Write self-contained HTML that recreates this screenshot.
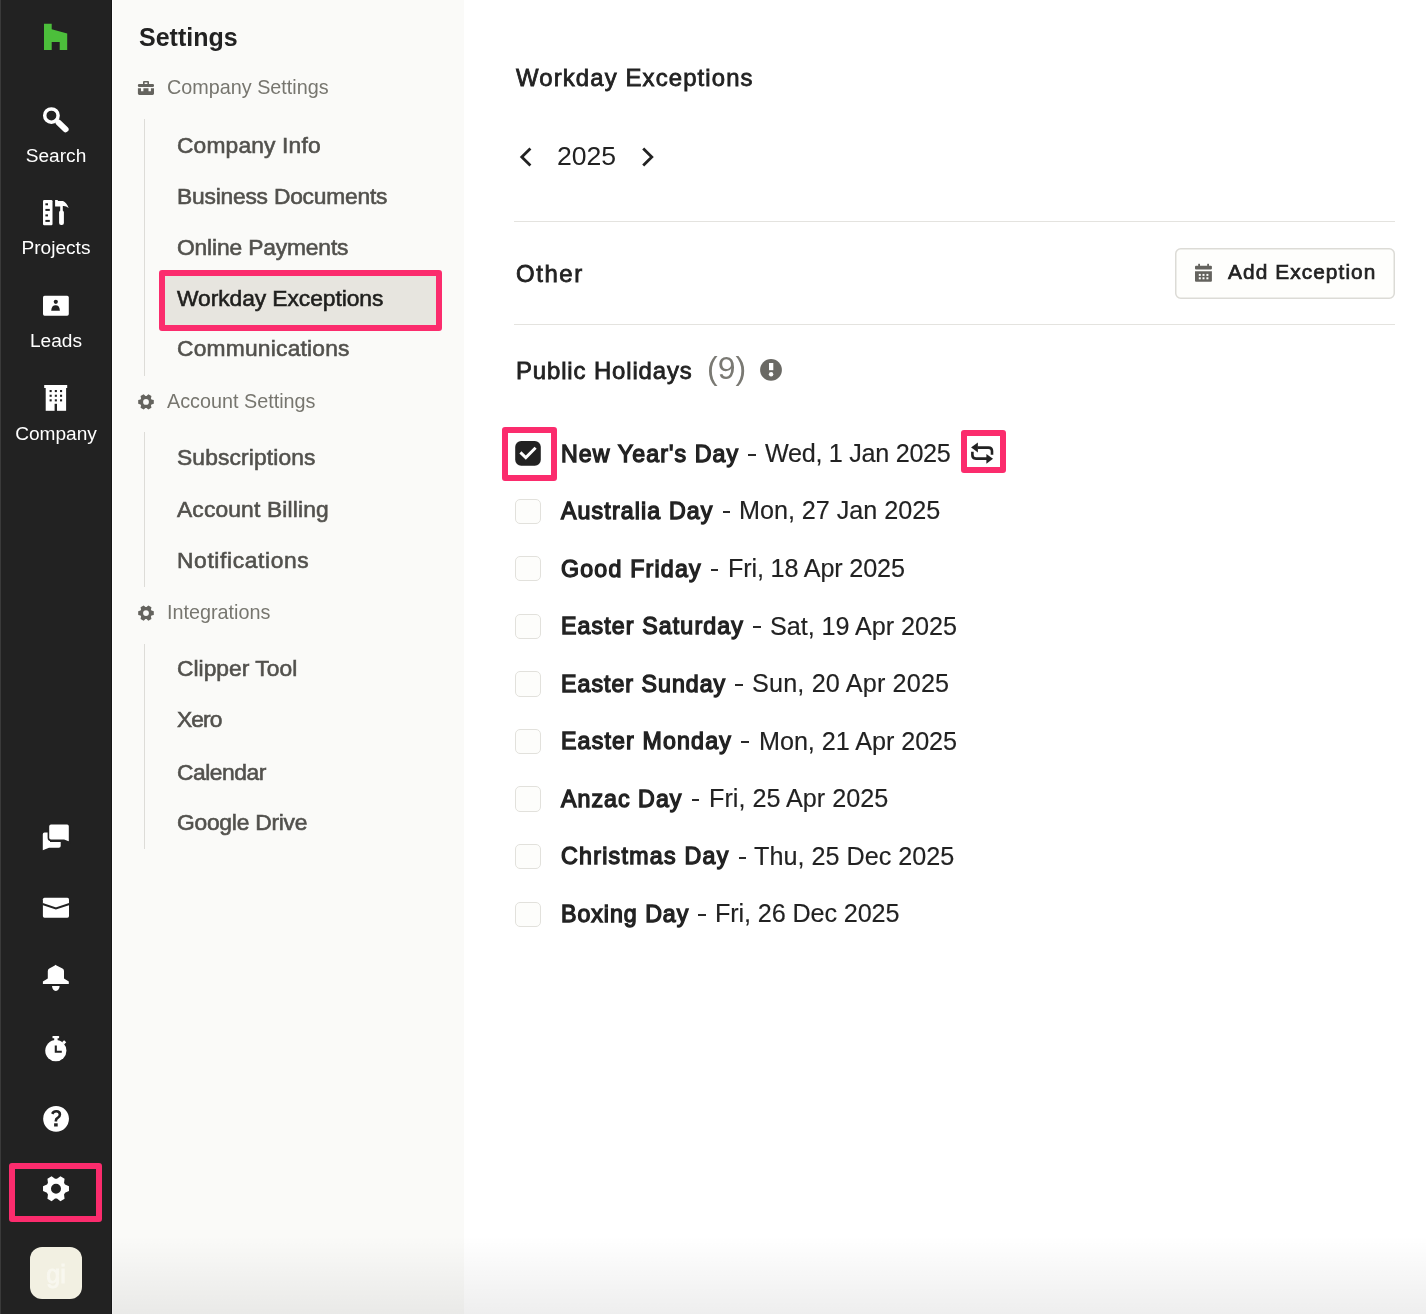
<!DOCTYPE html>
<html><head><meta charset="utf-8">
<style>
*{margin:0;padding:0;box-sizing:border-box}
html,body{width:1426px;height:1314px;overflow:hidden;background:#fff;font-family:"Liberation Sans",sans-serif}
.abs{position:absolute}
.t{position:absolute;white-space:nowrap;line-height:1;will-change:transform}
.row b{font-weight:700}
.sep{font-size:25.4px;word-spacing:0.5px}
.dt{font-size:25.5px}
.pink{position:absolute;border:6px solid #fb2c6d;border-radius:3px}
.cb{position:absolute;left:515px;width:25.6px;height:25.4px;border:1px solid #e2e1dc;border-radius:5px;background:#fdfdfb}
#shade{position:absolute;left:112px;top:1236px;width:1314px;height:78px;background:linear-gradient(to bottom,rgba(0,0,0,0),rgba(0,0,0,0.065))}
</style></head>
<body>
<div class="abs" style="left:0;top:0;width:112px;height:1314px;background:#222222"></div>
<div class="abs" style="left:0;top:0;width:1.3px;height:1314px;background:#3a3a3a"></div>
<div class="abs" style="left:111px;top:0;width:1px;height:1314px;background:#161616"></div>
<div class="abs" style="left:112px;top:0;width:352px;height:1314px;background:#fafaf8"></div>
<div class="abs" style="left:112px;top:0;width:1.2px;height:1314px;background:#ffffff"></div>
<svg class="abs" style="left:0;top:0" width="112" height="1314" viewBox="0 0 112 1314"><polygon fill="#4cbf3b" points="44,23.7 51.7,23.7 51.7,29.2 67.2,33.5 67.2,50 59.7,50 59.7,42 51.7,42 51.7,50 44,50"/><circle cx="51.4" cy="115.6" r="6.7" fill="none" stroke="#fff" stroke-width="3.5"/><line x1="58.6" y1="122.6" x2="65.6" y2="129.3" stroke="#fff" stroke-width="6" stroke-linecap="round"/><rect x="43" y="200" width="9.5" height="25.2" rx="1.2" fill="#fff"/><rect x="45.4" y="203.3" width="2.6" height="2" fill="#222"/><rect x="45.4" y="208.9" width="4.4" height="2" fill="#222"/><rect x="45.4" y="214.4" width="2.6" height="2" fill="#222"/><rect x="45.4" y="219.9" width="4.4" height="2" fill="#222"/><path fill="#fff" d="M55.1,200 L57.8,200 L57.8,201 L63,201 Q66.5,202.5 68.7,207.9 Q65.5,205.5 62.8,206 L62.8,211 L60.2,211 L60.2,206.6 L57.8,206.6 L57.8,206.6 L55.1,206.6 Z"/><rect x="59.1" y="210.5" width="4.8" height="14.6" rx="2" fill="#fff"/><rect x="43" y="295.8" width="25.8" height="19.9" rx="1.6" fill="#fff"/><circle cx="55.8" cy="301.8" r="2.1" fill="#222"/><path fill="#222" d="M51.2,310.7 Q51.6,305.3 55.6,305.3 Q59.6,305.3 59.9,310.7 Z"/><rect x="44.2" y="385" width="23" height="3" fill="#fff"/><rect x="45.7" y="387" width="20.4" height="23.8" fill="#fff"/><g fill="#222"><rect x="49.6" y="390" width="2.1" height="2.1"/><rect x="54.8" y="390" width="2.1" height="2.1"/><rect x="60" y="390" width="2.1" height="2.1"/><rect x="49.6" y="394.7" width="2.1" height="2.1"/><rect x="54.8" y="394.7" width="2.1" height="2.1"/><rect x="60" y="394.7" width="2.1" height="2.1"/><rect x="49.6" y="399.3" width="2.1" height="2.1"/><rect x="54.8" y="399.3" width="2.1" height="2.1"/><rect x="60" y="399.3" width="2.1" height="2.1"/><rect x="54.6" y="403.8" width="2.4" height="7.2"/></g><path fill="#fff" d="M44.5,832.5 L50,832.5 L50,842 L60.7,842 L60.7,846 Q60.7,847.8 58.8,847.8 L49,847.8 L42.8,850.2 L42.8,834.2 Q42.8,832.5 44.5,832.5 Z"/><path fill="#fff" stroke="#222" stroke-width="1.6" d="M51,823.8 L67.2,823.8 Q69.6,823.8 69.6,826.2 L69.6,842.6 L64,840.3 L51,840.3 Q48.4,840.3 48.4,837.7 L48.4,826.4 Q48.4,823.8 51,823.8 Z"/><rect x="42.9" y="897.7" width="26.1" height="20" rx="1.6" fill="#fff"/><polyline points="42.5,904 55.9,908.4 69.4,904" fill="none" stroke="#222" stroke-width="2"/><path fill="#fff" d="M55.6,964.8 L56.5,965.6 L62.5,968.5 Q64,969.3 64,971 L64,978.6 L68.8,981.6 L68.8,983.9 L42.9,983.9 L42.9,981.6 L47.8,978.6 L47.8,971 Q47.8,969.3 49.3,968.5 L54.8,965.6 Z"/><path fill="#fff" d="M52,986.1 L59.6,986.1 Q59.2,990.9 55.8,990.9 Q52.4,990.9 52,986.1 Z"/><circle cx="55.85" cy="1050.7" r="10.6" fill="#fff"/><rect x="52.5" y="1035.9" width="6.6" height="2.4" rx="0.6" fill="#fff"/><rect x="54.2" y="1037.5" width="3.4" height="4" fill="#fff"/><rect x="62.6" y="1040.8" width="3" height="3" transform="rotate(45 64.1 1042.3)" fill="#fff"/><path d="M55.8,1045.6 L55.8,1051.8 L61.8,1051.8" fill="none" stroke="#222" stroke-width="2.1"/><circle cx="56.05" cy="1118.8" r="12.9" fill="#fff"/><path d="M52.2,1113.8 Q53.5,1111.3 56.2,1111.3 Q59.9,1111.3 59.9,1114.6 Q59.9,1116.7 57.7,1117.8 Q55.9,1118.7 55.9,1120.4 L55.9,1121.4" fill="none" stroke="#222" stroke-width="2.6"/><rect x="54.1" y="1123.3" width="3.6" height="3.2" fill="#222"/><path fill="#fff" fill-rule="evenodd" d="M65.02,1192.78 L68.98,1191.09 L68.98,1186.31 L65.02,1184.62 L64.81,1184.18 L64.57,1183.75 L64.32,1183.33 L64.04,1182.92 L64.56,1178.65 L60.42,1176.26 L56.98,1178.85 L56.49,1178.81 L56.00,1178.80 L55.51,1178.81 L55.02,1178.85 L51.58,1176.26 L47.44,1178.65 L47.96,1182.92 L47.68,1183.33 L47.43,1183.75 L47.19,1184.18 L46.98,1184.62 L43.02,1186.31 L43.02,1191.09 L46.98,1192.78 L47.19,1193.22 L47.43,1193.65 L47.68,1194.07 L47.96,1194.48 L47.44,1198.75 L51.58,1201.14 L55.02,1198.55 L55.51,1198.59 L56.00,1198.60 L56.49,1198.59 L56.98,1198.55 L60.42,1201.14 L64.56,1198.75 L64.04,1194.48 L64.32,1194.07 L64.57,1193.65 L64.81,1193.22 Z M61.00,1188.70 A5.0,5.0 0 1,0 51.00,1188.70 A5.0,5.0 0 1,0 61.00,1188.70 Z"/></svg>
<div class="t" style="left:-4px;width:120px;text-align:center;top:145.53px;font-size:19.1px;color:#fff;font-weight:400;">Search</div>

<div class="t" style="left:-4px;width:120px;text-align:center;top:238.03px;font-size:19.1px;color:#fff;font-weight:400;">Projects</div>

<div class="t" style="left:-4px;width:120px;text-align:center;top:331.03px;font-size:19.1px;color:#fff;font-weight:400;">Leads</div>

<div class="t" style="left:-4px;width:120px;text-align:center;top:424.03px;font-size:19.1px;color:#fff;font-weight:400;">Company</div>

<div class="pink" style="left:9px;top:1163px;width:93px;height:59px"></div>
<div class="abs" style="left:30px;top:1246.5px;width:52px;height:52px;border-radius:12px;background:#f2f0e2"></div>
<div class="t" style="left:30px;width:52px;text-align:center;top:1262px;font-size:25px;color:#f8f7ef;font-weight:400;-webkit-text-stroke:0.8px #f8f7ef">gi</div>
<div class="t " style="left:138.5px;top:24.73px;font-size:25px;color:#222;font-weight:700;">Settings</div>

<svg class="abs" style="left:112px;top:0" width="352" height="900" viewBox="112 0 352 900"><g fill="#64635e"><path d="M143,84.2 L143,82 Q143,81 144,81 L148,81 Q149,81 149,82 L149,84.2 L147.4,84.2 L147.4,82.4 L144.6,82.4 L144.6,84.2 Z"/><rect x="137.9" y="84" width="16.1" height="3" rx="1.2"/><path d="M137.9,88.2 L141,88.2 L141,91.2 L143.4,91.2 L143.4,88.2 L148.5,88.2 L148.5,91.2 L150.9,91.2 L150.9,88.2 L154,88.2 L154,93.6 Q154,95 152.6,95 L139.3,95 Q137.9,95 137.9,93.6 Z"/><path fill-rule="evenodd" d="M151.45,404.42 L153.80,403.68 L153.80,400.12 L151.45,399.38 L151.33,399.14 L151.20,398.90 L151.06,398.67 L150.90,398.44 L151.44,396.04 L148.35,394.25 L146.54,395.92 L146.27,395.91 L146.00,395.90 L145.73,395.91 L145.46,395.92 L143.65,394.25 L140.56,396.04 L141.10,398.44 L140.94,398.67 L140.80,398.90 L140.67,399.14 L140.55,399.38 L138.20,400.12 L138.20,403.68 L140.55,404.42 L140.67,404.66 L140.80,404.90 L140.94,405.13 L141.10,405.36 L140.56,407.76 L143.65,409.55 L145.46,407.88 L145.73,407.89 L146.00,407.90 L146.27,407.89 L146.54,407.88 L148.35,409.55 L151.44,407.76 L150.90,405.36 L151.06,405.13 L151.20,404.90 L151.33,404.66 Z M148.90,401.90 A2.9,2.9 0 1,0 143.10,401.90 A2.9,2.9 0 1,0 148.90,401.90 Z"/><path fill-rule="evenodd" d="M151.45,615.62 L153.80,614.88 L153.80,611.32 L151.45,610.58 L151.33,610.34 L151.20,610.10 L151.06,609.87 L150.90,609.64 L151.44,607.24 L148.35,605.45 L146.54,607.12 L146.27,607.11 L146.00,607.10 L145.73,607.11 L145.46,607.12 L143.65,605.45 L140.56,607.24 L141.10,609.64 L140.94,609.87 L140.80,610.10 L140.67,610.34 L140.55,610.58 L138.20,611.32 L138.20,614.88 L140.55,615.62 L140.67,615.86 L140.80,616.10 L140.94,616.33 L141.10,616.56 L140.56,618.96 L143.65,620.75 L145.46,619.08 L145.73,619.09 L146.00,619.10 L146.27,619.09 L146.54,619.08 L148.35,620.75 L151.44,618.96 L150.90,616.56 L151.06,616.33 L151.20,616.10 L151.33,615.86 Z M148.90,613.10 A2.9,2.9 0 1,0 143.10,613.10 A2.9,2.9 0 1,0 148.90,613.10 Z"/></g><g fill="#dddcd8"><rect x="144" y="119" width="1" height="257"/><rect x="144" y="432" width="1" height="155"/><rect x="144" y="644" width="1" height="205"/></g></svg>
<div class="t " style="left:166.5px;top:77.74px;font-size:19.8px;color:#77766f;font-weight:400;">Company Settings</div>

<div class="t " style="left:166.5px;top:392.14px;font-size:19.8px;color:#77766f;font-weight:400;">Account Settings</div>

<div class="t " style="left:166.5px;top:603.24px;font-size:19.8px;color:#77766f;font-weight:400;">Integrations</div>

<div class="abs" style="left:165px;top:276px;width:272px;height:50px;background:#e7e5df"></div>
<div class="t" style="left:177.4px;top:134.30px;font-size:22.8px;color:#52514d;letter-spacing:0.151px;-webkit-text-stroke:0.6px #52514d">Company Info</div>

<div class="t" style="left:177.4px;top:185.20px;font-size:22.8px;color:#52514d;letter-spacing:-0.217px;-webkit-text-stroke:0.6px #52514d">Business Documents</div>

<div class="t" style="left:177.4px;top:236.00px;font-size:22.8px;color:#52514d;letter-spacing:-0.151px;-webkit-text-stroke:0.6px #52514d">Online Payments</div>

<div class="t" style="left:177.4px;top:286.70px;font-size:22.8px;color:#1f1f1d;letter-spacing:-0.064px;-webkit-text-stroke:0.6px #1f1f1d">Workday Exceptions</div>

<div class="t" style="left:177.4px;top:337.40px;font-size:22.8px;color:#52514d;letter-spacing:0.211px;-webkit-text-stroke:0.6px #52514d">Communications</div>

<div class="t" style="left:177.4px;top:446.30px;font-size:22.8px;color:#52514d;letter-spacing:0.133px;-webkit-text-stroke:0.6px #52514d">Subscriptions</div>

<div class="t" style="left:177.4px;top:497.70px;font-size:22.8px;color:#52514d;letter-spacing:0.152px;-webkit-text-stroke:0.6px #52514d">Account Billing</div>

<div class="t" style="left:177.4px;top:548.70px;font-size:22.8px;color:#52514d;letter-spacing:0.628px;-webkit-text-stroke:0.6px #52514d">Notifications</div>

<div class="t" style="left:177.4px;top:657.40px;font-size:22.8px;color:#52514d;letter-spacing:0.025px;-webkit-text-stroke:0.6px #52514d">Clipper Tool</div>

<div class="t" style="left:177.4px;top:708.30px;font-size:22.8px;color:#52514d;letter-spacing:-0.936px;-webkit-text-stroke:0.6px #52514d">Xero</div>

<div class="t" style="left:177.4px;top:760.70px;font-size:22.8px;color:#52514d;letter-spacing:-0.453px;-webkit-text-stroke:0.6px #52514d">Calendar</div>

<div class="t" style="left:177.4px;top:811.00px;font-size:22.8px;color:#52514d;letter-spacing:-0.241px;-webkit-text-stroke:0.6px #52514d">Google Drive</div>

<div class="pink" style="left:159px;top:270px;width:283px;height:61px"></div>
<div class="t" style="left:515.80px;top:65.77px;font-size:23.9px;color:#222;letter-spacing:1.130px;-webkit-text-stroke:0.8px #222;">Workday Exceptions</div>

<svg class="abs" style="left:464px;top:0" width="962" height="1000" viewBox="464 0 962 1000"><polyline points="530.4,148.5 521.8,157 530.4,165.5" fill="none" stroke="#222" stroke-width="2.8"/><polyline points="643.2,148.5 651.8,157 643.2,165.5" fill="none" stroke="#222" stroke-width="2.8"/><rect x="514" y="221" width="881" height="1" fill="#e4e3df"/><rect x="514" y="324" width="881" height="1" fill="#e4e3df"/><rect x="1175.75" y="248.75" width="218.5" height="49.5" rx="5" fill="#fefefc" stroke="#dcdbd6" stroke-width="1.5"/><g fill="#64635e"><rect x="1198.2" y="263.8" width="1.8" height="3"/><rect x="1207.2" y="263.8" width="1.8" height="3"/><rect x="1195" y="265.8" width="16.9" height="3.8" rx="1"/><path d="M1195,271.2 L1211.9,271.2 L1211.9,280.7 Q1211.9,281.7 1210.9,281.7 L1196,281.7 Q1195,281.7 1195,280.7 Z"/></g><g fill="#fefefc"><rect x="1198.8" y="273.9" width="2" height="2"/><rect x="1202.5" y="273.9" width="2" height="2"/><rect x="1206.4" y="273.9" width="2" height="2"/><rect x="1198.8" y="277.3" width="2" height="2"/><rect x="1202.5" y="277.3" width="2" height="2"/><rect x="1206.4" y="277.3" width="2" height="2"/></g><circle cx="771" cy="369.9" r="10.9" fill="#6a6964"/><rect x="769" y="363" width="4.3" height="7.2" fill="#fff"/><circle cx="771.1" cy="374.3" r="2.2" fill="#fff"/><rect x="515.2" y="441" width="25.6" height="24.8" rx="6" fill="#222"/><polyline points="520.4,452.4 525.8,457.6 535.6,447.7" fill="none" stroke="#fff" stroke-width="2.9"/><path d="M977.6,447.6 L988.5,447.6 Q992,447.6 992,451 L992,454.7" fill="none" stroke="#222" stroke-width="2.6"/><polygon points="971.1,447.4 977.9,442.4 977.9,452.4" fill="#222"/><path d="M972.4,451.7 L972.4,455 Q972.4,458.6 976,458.6 L987,458.6" fill="none" stroke="#222" stroke-width="2.6"/><polygon points="993,458.8 986.4,453.9 986.4,463.7" fill="#222"/></svg>
<div class="t " style="left:556.5px;top:143.28px;font-size:26.6px;color:#222;font-weight:400;">2025</div>

<div class="t" style="left:516.00px;top:261.77px;font-size:23.9px;color:#222;letter-spacing:1.613px;-webkit-text-stroke:0.8px #222;">Other</div>

<div class="t" style="left:1227.75px;top:262.39px;font-size:20.8px;color:#222;letter-spacing:1.103px;-webkit-text-stroke:0.7px #222;">Add Exception</div>

<div class="t" style="left:516.20px;top:358.67px;font-size:23.9px;color:#222;letter-spacing:0.887px;-webkit-text-stroke:0.8px #222;">Public Holidays</div>

<div class="t " style="left:706.5px;top:351.91px;font-size:32px;color:#7a7973;font-weight:400;">(9)</div>

<div class="t" style="left:561.35px;top:442.56px;font-size:23.2px;color:#222;letter-spacing:1.093px;-webkit-text-stroke:1.3px #222;">New Year's Day</div>

<div class="abs" style="left:748.3px;top:453.6px;width:7.8px;height:2.1px;background:#2a2a2a"></div>
<div class="t" style="left:765.08px;top:440.87px;font-size:25.2px;color:#222;letter-spacing:-0.297px;-webkit-text-stroke:0.15px #222;">Wed, 1 Jan 2025</div>

<div class="cb" style="top:498.6px"></div>
<div class="t" style="left:561.35px;top:500.12px;font-size:23.2px;color:#222;letter-spacing:1.122px;-webkit-text-stroke:1.3px #222;">Australia Day</div>

<div class="abs" style="left:722.5px;top:511.2px;width:7.8px;height:2.1px;background:#2a2a2a"></div>
<div class="t" style="left:739.48px;top:498.43px;font-size:25.2px;color:#222;letter-spacing:-0.027px;-webkit-text-stroke:0.15px #222;">Mon, 27 Jan 2025</div>

<div class="cb" style="top:556.1px"></div>
<div class="t" style="left:561.35px;top:557.68px;font-size:23.2px;color:#222;letter-spacing:1.200px;-webkit-text-stroke:1.3px #222;">Good Friday</div>

<div class="abs" style="left:710.6px;top:568.7px;width:7.8px;height:2.1px;background:#2a2a2a"></div>
<div class="t" style="left:727.68px;top:555.99px;font-size:25.2px;color:#222;letter-spacing:-0.155px;-webkit-text-stroke:0.15px #222;">Fri, 18 Apr 2025</div>

<div class="cb" style="top:613.7px"></div>
<div class="t" style="left:561.35px;top:615.24px;font-size:23.2px;color:#222;letter-spacing:1.111px;-webkit-text-stroke:1.3px #222;">Easter Saturday</div>

<div class="abs" style="left:752.9px;top:626.3px;width:7.8px;height:2.1px;background:#2a2a2a"></div>
<div class="t" style="left:769.58px;top:613.55px;font-size:25.2px;color:#222;letter-spacing:-0.046px;-webkit-text-stroke:0.15px #222;">Sat, 19 Apr 2025</div>

<div class="cb" style="top:671.2px"></div>
<div class="t" style="left:561.35px;top:672.80px;font-size:23.2px;color:#222;letter-spacing:1.009px;-webkit-text-stroke:1.3px #222;">Easter Sunday</div>

<div class="abs" style="left:735.3px;top:683.8px;width:7.8px;height:2.1px;background:#2a2a2a"></div>
<div class="t" style="left:751.98px;top:671.11px;font-size:25.2px;color:#222;letter-spacing:0.164px;-webkit-text-stroke:0.15px #222;">Sun, 20 Apr 2025</div>

<div class="cb" style="top:728.8px"></div>
<div class="t" style="left:561.35px;top:730.36px;font-size:23.2px;color:#222;letter-spacing:1.155px;-webkit-text-stroke:1.3px #222;">Easter Monday</div>

<div class="abs" style="left:741.0px;top:741.4px;width:7.8px;height:2.1px;background:#2a2a2a"></div>
<div class="t" style="left:758.88px;top:728.67px;font-size:25.2px;color:#222;letter-spacing:-0.052px;-webkit-text-stroke:0.15px #222;">Mon, 21 Apr 2025</div>

<div class="cb" style="top:786.4px"></div>
<div class="t" style="left:561.35px;top:787.92px;font-size:23.2px;color:#222;letter-spacing:1.039px;-webkit-text-stroke:1.3px #222;">Anzac Day</div>

<div class="abs" style="left:691.6px;top:799.0px;width:7.8px;height:2.1px;background:#2a2a2a"></div>
<div class="t" style="left:708.68px;top:786.23px;font-size:25.2px;color:#222;letter-spacing:0.005px;-webkit-text-stroke:0.15px #222;">Fri, 25 Apr 2025</div>

<div class="cb" style="top:843.9px"></div>
<div class="t" style="left:561.35px;top:845.48px;font-size:23.2px;color:#222;letter-spacing:1.276px;-webkit-text-stroke:1.3px #222;">Christmas Day</div>

<div class="abs" style="left:738.5px;top:856.5px;width:7.8px;height:2.1px;background:#2a2a2a"></div>
<div class="t" style="left:753.88px;top:843.79px;font-size:25.2px;color:#222;letter-spacing:0.007px;-webkit-text-stroke:0.15px #222;">Thu, 25 Dec 2025</div>

<div class="cb" style="top:901.5px"></div>
<div class="t" style="left:561.35px;top:903.04px;font-size:23.2px;color:#222;letter-spacing:0.972px;-webkit-text-stroke:1.3px #222;">Boxing Day</div>

<div class="abs" style="left:698.3px;top:914.1px;width:7.8px;height:2.1px;background:#2a2a2a"></div>
<div class="t" style="left:715.38px;top:901.35px;font-size:25.2px;color:#222;letter-spacing:-0.119px;-webkit-text-stroke:0.15px #222;">Fri, 26 Dec 2025</div>

<div class="pink" style="left:502px;top:427px;width:55px;height:54px"></div>
<div class="pink" style="left:961px;top:430px;width:45px;height:43px"></div>
<div id="shade"></div>
</body></html>
